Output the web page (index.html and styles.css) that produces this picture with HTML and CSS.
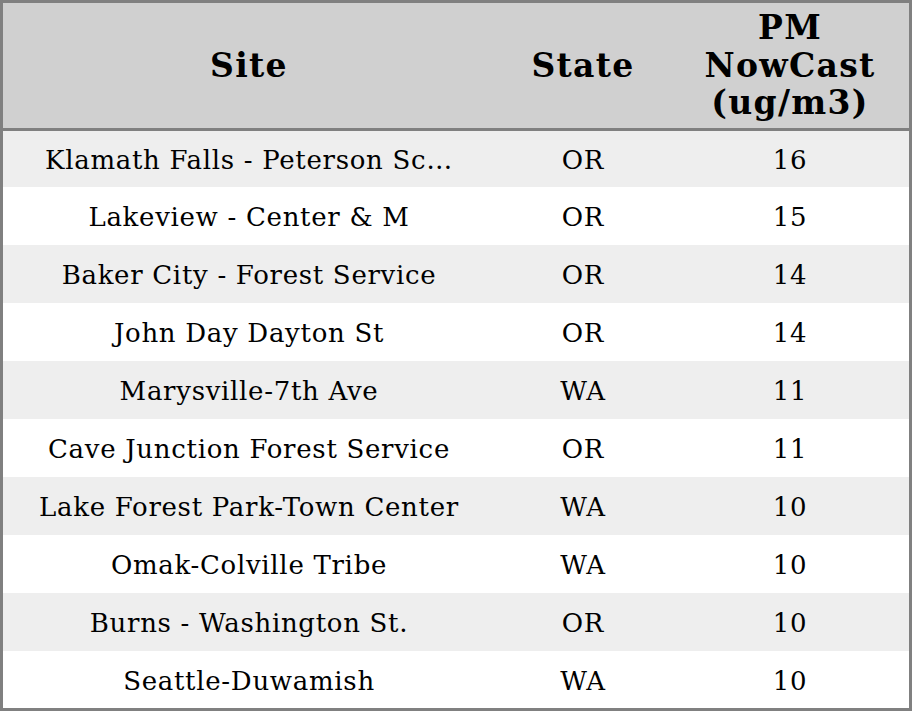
FILE: index.html
```html
<!DOCTYPE html>
<html>
<head>
<meta charset="utf-8">
<link rel="stylesheet" href="styles.css">
</head>
<body>
<table class="aq-table">
  <colgroup>
    <col class="col-site">
    <col class="col-state">
    <col class="col-pm">
  </colgroup>
  <thead>
    <tr>
      <th>Site</th>
      <th>State</th>
      <th>PM<br>NowCast<br>(ug/m3)</th>
    </tr>
  </thead>
  <tbody>
    <tr><td>Klamath Falls - Peterson Sc…</td><td>OR</td><td>16</td></tr>
    <tr><td>Lakeview - Center &amp; M</td><td>OR</td><td>15</td></tr>
    <tr><td>Baker City - Forest Service</td><td>OR</td><td>14</td></tr>
    <tr><td>John Day Dayton St</td><td>OR</td><td>14</td></tr>
    <tr><td>Marysville-7th Ave</td><td>WA</td><td>11</td></tr>
    <tr><td>Cave Junction Forest Service</td><td>OR</td><td>11</td></tr>
    <tr><td>Lake Forest Park-Town Center</td><td>WA</td><td>10</td></tr>
    <tr><td>Omak-Colville Tribe</td><td>WA</td><td>10</td></tr>
    <tr><td>Burns - Washington St.</td><td>OR</td><td>10</td></tr>
    <tr><td>Seattle-Duwamish</td><td>WA</td><td>10</td></tr>
  </tbody>
</table>
</body>
</html>
```
FILE: styles.css
```css
html, body {
  margin: 0;
  padding: 0;
  background: #ffffff;
}

.aq-table {
  width: 912px;
  border: 3px solid #808080;
  border-collapse: separate;
  border-spacing: 0;
  table-layout: fixed;
  font-family: "DejaVu Serif", serif;
  color: #000000;
}

.col-site { width: 492px; }
.col-state { width: 176px; }
.col-pm { width: 238px; }

.aq-table th {
  height: 125px;
  padding: 0;
  background: #d0d0d0;
  border-bottom: 3px solid #808080;
  font-size: 33px;
  font-weight: bold;
  letter-spacing: 1.3px;
  line-height: 37.5px;
  text-align: center;
  vertical-align: middle;
}

.aq-table td {
  height: 58px;
  padding: 2px 0 0;
  font-size: 26px;
  letter-spacing: 0.7px;
  text-align: center;
  vertical-align: middle;
  white-space: nowrap;
  overflow: hidden;
}

.aq-table tbody tr:first-child td { height: 54px; }
.aq-table tbody tr:nth-child(n+2) td { height: 56px; }
.aq-table tbody tr:last-child td { height: 55px; }

.aq-table tbody tr:nth-child(odd) td {
  background: #eeeeee;
}
```
